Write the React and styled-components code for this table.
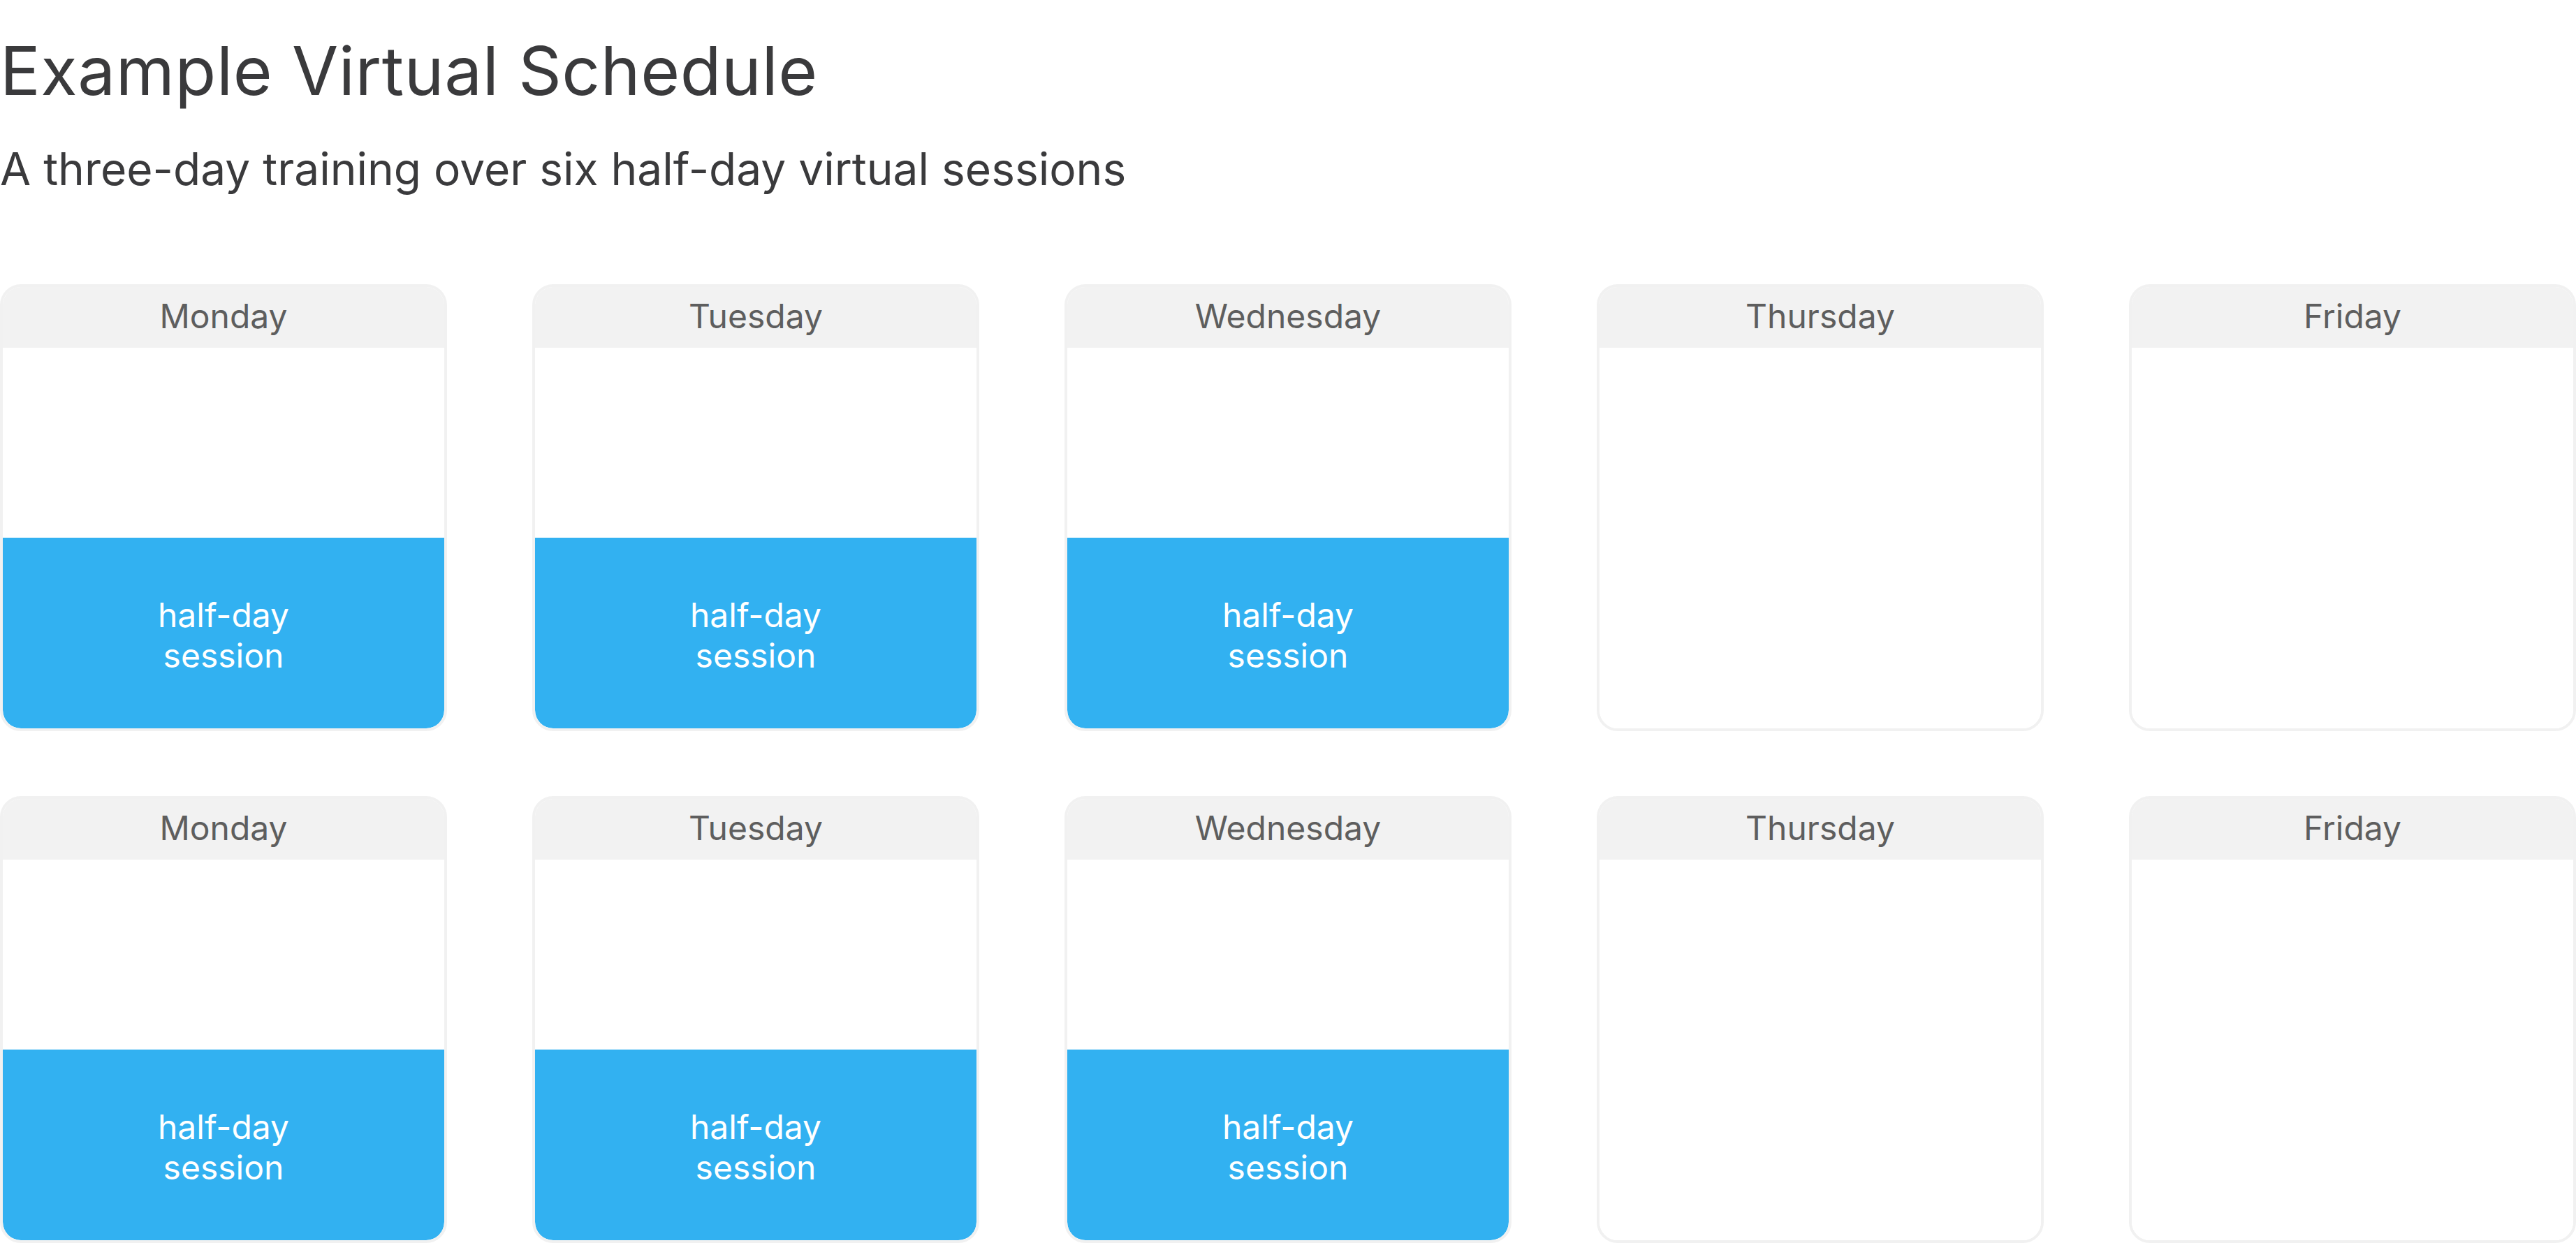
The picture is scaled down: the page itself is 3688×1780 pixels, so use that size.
import React from "react";
import styled, { createGlobalStyle } from "styled-components";

const GlobalStyle = createGlobalStyle`
  html, body {
    margin: 0;
    padding: 0;
    background: #ffffff;
  }
  body {
    font-family: Inter, "Noto Sans", "Liberation Sans", sans-serif;
  }
  * { box-sizing: border-box; }
`;

const Page = styled.main`
  padding-top: 44px;
  width: 3688px;
`;

const Title = styled.h1`
  margin: 0;
  font-size: 96px;
  line-height: 1.2;
  font-weight: 400;
  letter-spacing: 0.6px;
  color: #3a3a3c;
`;

const Subtitle = styled.p`
  margin: 45px 0 0;
  font-size: 64px;
  line-height: 1.2;
  font-weight: 400;
  color: #3a3a3c;
`;

const Grid = styled.section`
  margin-top: 126px;
  display: grid;
  grid-template-columns: repeat(5, 1fr);
  column-gap: 122px;
  row-gap: 93px;
`;

const Card = styled.div`
  aspect-ratio: 1 / 1;
  border: 4px solid #f1f1f1;
  border-radius: 30px;
  overflow: hidden;
  display: flex;
  flex-direction: column;
  background: #ffffff;
`;

const DayHeader = styled.div`
  height: 87px;
  flex: none;
  padding-bottom: 3px;
  background: #f2f2f2;
  display: flex;
  align-items: center;
  justify-content: center;
  font-size: 48px;
  line-height: 1.2;
  color: #5e5e5e;
`;

const Slot = styled.div`
  flex: 1 1 0;
  min-height: 0;
  display: flex;
  align-items: center;
  justify-content: center;
  text-align: center;
  font-size: 48px;
  line-height: 1.2;
  color: #ffffff;
  background: ${(p) => (p.$session ? "#32b1f1" : "#ffffff")};
  border-radius: ${(p) => (p.$session ? "0 0 26px 26px" : "0")};
`;

const SessionLabel = styled.span`
  display: block;
  padding-top: 6px;
`;

const days = [
  { name: "Monday", session: true },
  { name: "Tuesday", session: true },
  { name: "Wednesday", session: true },
  { name: "Thursday", session: false },
  { name: "Friday", session: false },
];

function DayCard({ name, session }) {
  return (
    <Card>
      <DayHeader>{name}</DayHeader>
      <Slot />
      <Slot $session={session}>
        {session ? (
          <SessionLabel>
            half-day
            <br />
            session
          </SessionLabel>
        ) : null}
      </Slot>
    </Card>
  );
}

export default function App() {
  return (
    <>
      <GlobalStyle />
      <Page>
        <Title>Example Virtual Schedule</Title>
        <Subtitle>A three-day training over six half-day virtual sessions</Subtitle>
        <Grid>
          {[0, 1].map((week) =>
            days.map((d) => <DayCard key={`${week}-${d.name}`} {...d} />)
          )}
        </Grid>
      </Page>
    </>
  );
}
